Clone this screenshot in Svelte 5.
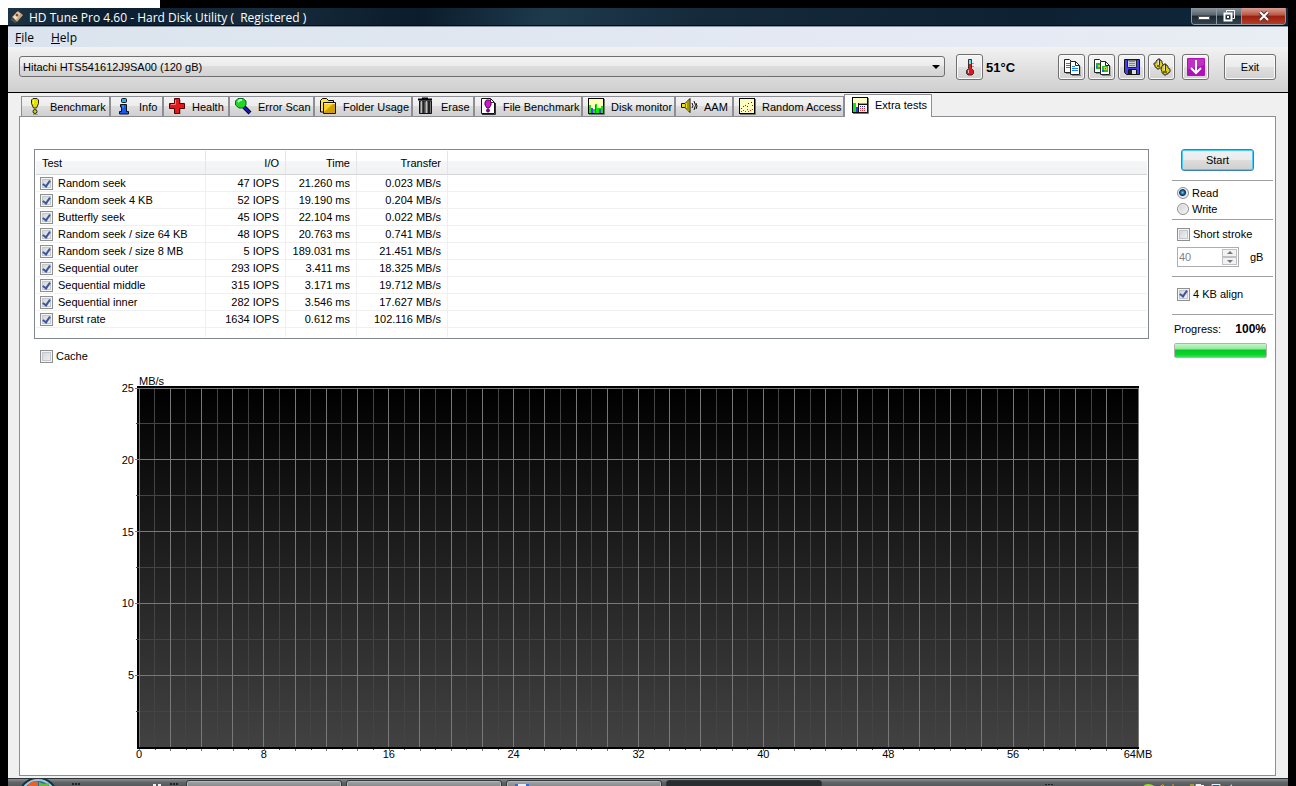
<script>
  const tabs = [
    { id: 'benchmark', label: 'Benchmark' },
    { id: 'info', label: 'Info' },
    { id: 'health', label: 'Health' },
    { id: 'scan', label: 'Error Scan' },
    { id: 'folder', label: 'Folder Usage' },
    { id: 'erase', label: 'Erase' },
    { id: 'file', label: 'File Benchmark' },
    { id: 'monitor', label: 'Disk monitor' },
    { id: 'aam', label: 'AAM' },
    { id: 'random', label: 'Random Access' },
    { id: 'extra', label: 'Extra tests' }
  ];
  let active = $state('extra');

  let tests = $state([
    { name: 'Random seek', io: '47 IOPS', time: '21.260 ms', transfer: '0.023 MB/s', on: true },
    { name: 'Random seek 4 KB', io: '52 IOPS', time: '19.190 ms', transfer: '0.204 MB/s', on: true },
    { name: 'Butterfly seek', io: '45 IOPS', time: '22.104 ms', transfer: '0.022 MB/s', on: true },
    { name: 'Random seek / size 64 KB', io: '48 IOPS', time: '20.763 ms', transfer: '0.741 MB/s', on: true },
    { name: 'Random seek / size 8 MB', io: '5 IOPS', time: '189.031 ms', transfer: '21.451 MB/s', on: true },
    { name: 'Sequential outer', io: '293 IOPS', time: '3.411 ms', transfer: '18.325 MB/s', on: true },
    { name: 'Sequential middle', io: '315 IOPS', time: '3.171 ms', transfer: '19.712 MB/s', on: true },
    { name: 'Sequential inner', io: '282 IOPS', time: '3.546 ms', transfer: '17.627 MB/s', on: true },
    { name: 'Burst rate', io: '1634 IOPS', time: '0.612 ms', transfer: '102.116 MB/s', on: true }
  ]);

  let mode = $state('read');
  let shortStroke = $state(false);
  let align = $state(true);
  let cache = $state(false);
  let size = $state(40);
  let progress = $state(100);

  const columns = Array.from({ length: 65 }, (_, i) => i);
  const rows = Array.from({ length: 11 }, (_, i) => i);
  const tools = ['copy', 'copyimage', 'save', 'options'];
</script>

{#snippet icon(name)}
  <svg class="icon" viewBox="0 0 18 18" aria-hidden="true">
    {#if name === 'benchmark'}
      <path d="M7 17h5v1H7z" fill="#999" />
      <path d="M7 1.500h4l1.500 1.500v3.500L10.500 11h-3L5.500 6.500V3z" fill="#e6e000" stroke="#222" />
      <path d="M7.500 3v4" stroke="#ffffa0" />
      <circle cx="9" cy="14.500" r="2" fill="#d8d000" stroke="#222" />
    {:else if name === 'info'}
      <rect x="6.500" y="1.500" width="5" height="4" rx="1" fill="#20b8f8" stroke="#111" />
      <path d="M5.500 7.500h6v7h2v2.500h-9v-2.500h2v-4.500h-1z" fill="#1858f0" stroke="#111" />
      <path d="M8 8v3" stroke="#50b0ff" />
    {:else if name === 'health'}
      <path d="M7 2.500h5.500v4.500H17v5h-4.500v5H7v-5H2V7h5z" fill="#777" />
      <path d="M6.500 1.500h5v5h5v5h-5v5h-5v-5h-5v-5h5z" fill="#e01820" stroke="#500" />
      <path d="M7.500 3v4.500H3" fill="none" stroke="#ff7878" />
    {:else if name === 'scan'}
      <path d="M10 10l6 6" stroke="#000" stroke-width="4" />
      <path d="M10 10l5.500 5.500" stroke="#1818d8" stroke-width="2" />
      <path d="M4 1.500h5L12 4v4l-3 3H5L1.500 8V4z" fill="#20d820" stroke="#063" />
      <path d="M4 5l2-2h2" stroke="#c0ffc0" stroke-width="2" fill="none" />
    {:else if name === 'folder'}
      <path d="M1.500 15V3.500l2-2h4l2 2h5V15z" fill="#ffe050" stroke="#000" />
      <path d="M4.500 5.500h12v11h-12z" fill="#d0a000" stroke="#111" />
      <path d="M5 6h10L5 15z" fill="#f8d030" />
      <path d="M5 6.500h11" stroke="#ffef90" />
    {:else if name === 'erase'}
      <path d="M1 2.500h14M5 1.500h6" stroke="#000" stroke-width="2" />
      <path d="M2.500 4h12v12.500h-12z" fill="#777" stroke="#111" />
      <path d="M4.500 4v12M9.500 4v12" stroke="#bbb" />
      <path d="M6.500 4v12M12 4v12" stroke="#222" stroke-width="2" />
    {:else if name === 'file'}
      <path d="M2.500 1.500h9l4 4v11h-13z" fill="#fff" stroke="#111" />
      <path d="M11.500 1.500v4h4M3 17.500h13.500V6" fill="none" stroke="#333" />
      <path d="M7.500 3h3L12 5v3l-2 3H8L6 8V5z" fill="#d018d0" stroke="#505" />
      <circle cx="9" cy="13.500" r="1.500" fill="#a0a" stroke="#505" />
    {:else if name === 'monitor'}
      <path d="M2 17.500h15.500V2" stroke="#777" fill="none" />
      <rect x="1" y="1" width="16" height="16" fill="#000" />
      <path d="M2 2h14v14H2z" fill="#ffffb8" />
      <path d="M2 8h2v3h1v1h3V7h2v4h4V9h2v7H2z" fill="#10e810" />
      <path d="M4 11h2v5H4zM8 8h1v8H8zM12 12h2v4h-2z" fill="#4048e8" />
    {:else if name === 'aam'}
      <path d="M1.500 6.500H5l5-5v14l-5-5H1.500z" fill="#f0e010" stroke="#111" />
      <path d="M5.500 7v4" stroke="#776800" />
      <path d="M8 4v10" stroke="#a89800" stroke-width="2" />
      <path d="M12 6q2 3 0 5M14 4q3 4 0 9M16 6q2 3 0 6" stroke="#111" fill="none" />
    {:else if name === 'random'}
      <path d="M2 17.500h15.500V2" stroke="#777" fill="none" />
      <rect x="1.500" y="1.500" width="15" height="15" fill="#fffcc0" stroke="#000" />
      <path d="M3 11h1v1H3zM5 9h1v1H5zM7 8h1v1H7zM9 9h1v1H9zM10 6h1v1h-1zM13 5h1v1h-1zM14 8h1v1h-1z" fill="#22f" />
      <path d="M3 14h1v1H3zM5 13h1v1H5zM7 14h1v1H7zM9 12h1v1H9zM12 13h1v1h-1zM14 12h1v1h-1zM10 14h1v1h-1z" fill="#e22" />
    {:else if name === 'extra'}
      <path d="M2 17.500h15.500V2" stroke="#777" fill="none" />
      <rect x="1.500" y="1.500" width="15" height="15" fill="#ffffc8" stroke="#000" />
      <path d="M2 7h3v9H2z" fill="#10e810" />
      <path d="M5 11h2v5H5z" fill="#33f" />
      <path d="M7 7h10v10H7z" fill="#111" />
      <path d="M8 9h8v7H8z" fill="#fff" />
      <path d="M8 7.500h8" stroke="#999" />
      <path d="M9 10.500h6" stroke="#22f" stroke-dasharray="1 1" />
      <path d="M9 12.500h6M9 14.500h6" stroke="#e22" stroke-dasharray="1 1" />
    {:else if name === 'thermo'}
      <path d="M7.500 1.500h3v9l2 2v3l-1.500 1.500h-4L5.500 15.500v-3l2-2z" fill="#e0181c" stroke="#333" />
      <path d="M8 2h2v4H8z" fill="#58e8f0" />
      <path d="M7.500 12v3" stroke="#ffb0b0" />
      <path d="M11 5.500h2M11 8.500h2" stroke="#999" />
    {:else if name === 'copy' || name === 'copyimage'}
      <path d="M3 15.500h4M9 17.500h9V8" fill="none" stroke="#888" />
      <path d="M1.500 1.500h5l3 3v10h-8z" fill="#fff" stroke="#222" />
      <path d="M7.500 3.500h5l4 4v9h-9z" fill="#fff" stroke="#222" />
      <path d="M12.500 3.500v4h4" fill="none" stroke="#222" />
      {#if name === 'copy'}
        <path d="M3 5.500h4M3 7.500h4M3 9.500h4M9 8.500h3M9 10.500h6M9 12.500h6" stroke="#1880f0" />
      {:else}
        <path d="M3 5h4v6H3z" fill="#18b830" />
        <path d="M9 8h6v6H9z" fill="#20c030" />
        <path d="M5 7h2v2H5zM11 9h3v3h-3z" fill="#e8c810" />
        <path d="M3 8h1v2H3zM9 12h2v2H9z" fill="#1868e0" />
        <path d="M12 10h1v1h-1z" fill="#e22" />
      {/if}
    {:else if name === 'save'}
      <path d="M1.500 1.500h15v15h-13l-2-2z" fill="#4040f0" stroke="#111" />
      <path d="M4.500 2h9v7.500h-9z" fill="#d0d0d0" stroke="#223" />
      <path d="M6 3.500h6M6 5.500h6M6 7.500h6" stroke="#888" />
      <path d="M5.500 11.500h8v5h-8z" fill="#ddd" stroke="#111" />
      <path d="M6 12h3v4H6z" fill="#222" />
    {:else if name === 'options'}
      <path d="M3 3l1-1h1V1h2v1l2 1v2l1 1v2L8 10H6v1H4v-1L2 9V7H1V5h2z" fill="#e0d010" stroke="#333" />
      <path d="M9 8l1-1h1V6h2v1l2 1v2l2 1v3l-2 1v1h-2v1h-2v-1l-2-1v-2l-1-1z" fill="#e0d010" stroke="#333" />
      <path d="M6.500 1v7M12.500 6v7" stroke="#333" />
      <path d="M5.500 2v5M11.500 7v5" stroke="#ddd" />
      <path d="M4 8h3M10 14h4" stroke="#776c00" stroke-width="2" />
    {:else if name === 'update'}
      <rect width="18" height="18" rx="1" fill="#b010b8" />
      <path d="M1 1h16v6L1 11z" fill="#c030c4" />
      <path d="M9 2v12M4 10l5 5 5-5" fill="none" stroke="#fff" stroke-width="2" />
    {/if}
  </svg>
{/snippet}

<div class="screen">
  <div class="window">
    <header class="titlebar">
      <svg class="app-icon" viewBox="0 0 14 14" aria-hidden="true">
        <path d="M2 7l6-6 5 4-6 7z" fill="#c9a27a" />
        <path d="M3 7l4-5 3 2-4 6z" fill="#f0dfc8" />
        <circle cx="7" cy="5" r="1.500" fill="#7a4a28" />
        <path d="M1 8l6 4-2 1-4-3z" fill="#555" />
      </svg>
      <h1>HD Tune Pro 4.60 - Hard Disk Utility (&nbsp; Registered )</h1>
      <div class="caption">
        <button aria-label="Minimize">
          <svg width="14" height="12" viewBox="0 0 14 12"><rect x="1.500" y="6.500" width="11" height="3" fill="#fff" stroke="#555" /></svg>
        </button>
        <button aria-label="Restore">
          <svg width="12" height="12" viewBox="0 0 12 12">
            <path d="M3.500 2.500v-2h8v8h-2" fill="none" stroke="#fff" />
            <path d="M1.500 3.500h7v7h-7z" fill="none" stroke="#fff" stroke-width="2" />
            <path d="M4 6h2v2H4z" fill="#fff" />
          </svg>
        </button>
        <button class="close" aria-label="Close">
          <svg width="12" height="11" viewBox="0 0 12 11">
            <path d="M2 1l8 8M10 1L2 9" stroke="#533" stroke-width="4" />
            <path d="M2 1l8 8M10 1L2 9" stroke="#fff" stroke-width="2" />
          </svg>
        </button>
      </div>
    </header>

    <nav class="menubar">
      <a href="#file"><u>F</u>ile</a>
      <a href="#help"><u>H</u>elp</a>
    </nav>

    <div class="toolbar">
      <div class="drive">
        <select aria-label="Drive">
          <option>Hitachi HTS541612J9SA00 (120 gB)</option>
        </select>
      </div>
      <div class="temperature">
        <button class="tool" aria-label="Temperature">{@render icon('thermo')}</button>
        <strong>51°C</strong>
      </div>
      <div class="tools">
        {#each tools as tool}
          <button class="tool" aria-label={tool}>{@render icon(tool)}</button>
        {/each}
      </div>
      <button class="tool update" aria-label="Minimize to tray">{@render icon('update')}</button>
      <button class="exit">Exit</button>
    </div>

    <main>
      <div class="tabs" role="tablist">
        {#each tabs as tab}
          <button role="tab" class="tab" class:active={active === tab.id} aria-selected={active === tab.id} onclick={() => (active = tab.id)}>
            {@render icon(tab.id)}
            <span>{tab.label}</span>
          </button>
        {/each}
      </div>

      <div class="panel">
        <section class="results">
          <div class="list">
            <table>
              <colgroup>
                <col class="c-test" /><col class="c-io" /><col class="c-time" /><col class="c-transfer" /><col />
              </colgroup>
              <thead>
                <tr><th>Test</th><th>I/O</th><th>Time</th><th>Transfer</th><th></th></tr>
              </thead>
              <tbody>
                {#each tests as test}
                  <tr>
                    <td><label class="check"><input type="checkbox" bind:checked={test.on} />{test.name}</label></td>
                    <td>{test.io}</td>
                    <td>{test.time}</td>
                    <td>{test.transfer}</td>
                    <td></td>
                  </tr>
                {/each}
                <tr class="filler"><td></td><td></td><td></td><td></td><td></td></tr>
              </tbody>
            </table>
          </div>

          <label class="check cache"><input type="checkbox" bind:checked={cache} />Cache</label>

          <div class="chart">
            <svg class="plot" role="img" aria-label="Transfer rate in MB/s">
              <defs>
                <linearGradient id="shade" x1="0" y1="0" x2="0" y2="1">
                  <stop offset="0" stop-color="#000" />
                  <stop offset="1" stop-color="#424242" />
                </linearGradient>
              </defs>
              <rect width="100%" height="100%" fill="url(#shade)" />
              <!-- minor lines first so the major ones stay on top -->
              {#each columns.filter((c) => c % 2) as c}
                <line class="minor" x1="{c / 0.64}%" x2="{c / 0.64}%" y1="0" y2="100%" />
              {/each}
              {#each rows.filter((r) => r % 2) as r}
                <line class="minor" x1="-3" x2="100%" y1="{r * 10}%" y2="{r * 10}%" />
              {/each}
              {#each columns.filter((c) => c % 2 === 0) as c}
                <line class="major" x1="{c / 0.64}%" x2="{c / 0.64}%" y1="0" y2="100%" />
              {/each}
              {#each rows.filter((r) => r % 2 === 0 && r < 10) as r}
                <line class="major" x1="-4" x2="100%" y1="{r * 10}%" y2="{r * 10}%" />
                <text x="-5" y="{r * 10}%" dy="4" text-anchor="end">{25 - r * 2.5}</text>
              {/each}
              <text x="0" y="-3">MB/s</text>
              {#each columns.filter((c) => c % 8 === 0) as c}
                <text x="{c / 0.64}%" y="100%" dy="11" text-anchor="middle">{c}{c === 64 ? 'MB' : ''}</text>
              {/each}
            </svg>
            <div class="ticks">
              {#each columns as c}<i class:long={c % 2 === 0}></i>{/each}
            </div>
          </div>
        </section>

        <aside>
          <button class="start">Start</button>
          <div class="group">
            <label class="option"><input type="radio" value="read" bind:group={mode} />Read</label>
            <label class="option"><input type="radio" value="write" bind:group={mode} />Write</label>
          </div>
          <div class="group stroke">
            <label class="check"><input type="checkbox" bind:checked={shortStroke} />Short stroke</label>
            <div class="size">
              <div class="spin" class:off={!shortStroke}>
                <input id="size" type="number" bind:value={size} disabled={!shortStroke} />
                <div class="arrows">
                  <button aria-label="Increase" disabled={!shortStroke} onclick={() => size++}></button>
                  <button class="down" aria-label="Decrease" disabled={!shortStroke} onclick={() => size--}></button>
                </div>
              </div>
              <label for="size">gB</label>
            </div>
          </div>
          <div class="group align">
            <label class="check"><input type="checkbox" bind:checked={align} />4 KB align</label>
          </div>
          <div class="group">
            <div class="progress-text"><span>Progress:</span><strong>{progress}%</strong></div>
            <div class="bar"><div class="fill" style="width: {progress}%"></div></div>
          </div>
        </aside>
      </div>
    </main>
  </div>

  <footer class="taskbar">
    <svg class="orb" viewBox="0 0 40 40" aria-hidden="true">
      <circle cx="20" cy="20" r="19" fill="#2a6a94" stroke="#12303f" stroke-width="2" />
      <circle cx="20" cy="20" r="17" fill="none" stroke="#9cc8dc" stroke-width="2" />
      <path d="M10 8q5-6 10-3v6H9z" fill="#e8602c" />
      <path d="M21 5q5 3 10 1l-1 6h-9z" fill="#6cb43c" />
    </svg>
    <span class="grip"></span>
    <svg class="launch" viewBox="0 0 10 4" aria-hidden="true">
      <path d="M1 2h3v2H1zM6 2h3v2H6z" fill="#eee" />
    </svg>
    <span class="grip"></span>
    <div class="tasks">
      <span class="task"></span>
      <span class="task"></span>
      <span class="task">
        <svg width="14" height="4" viewBox="0 0 14 4"><path d="M0 4V1h14v3z" fill="#3a68c8" /><path d="M3 1h8v3H3z" fill="#e8ecf4" /></svg>
      </span>
      <span class="task current"></span>
    </div>
    <svg class="tray" viewBox="0 0 192 8" aria-hidden="true">
      <path d="M1 5.500h8" stroke="#222" stroke-dasharray="2 1" />
      <path d="M44 7.500h10" stroke="#999" stroke-dasharray="3 2" />
      <path d="M99 8q1-3 5-3 4 0 8 3z" fill="#a0dc30" />
      <path d="M116 7.500l3-2 1 2M129 5v3" stroke="#e0a020" fill="none" />
      <path d="M122 8V6l5 1v1z" fill="#2a7a88" />
      <path d="M147 5v3M149 5v3" stroke="#e8d020" />
      <path d="M152 5h5v1h3v2h-9z" fill="#eee" />
      <path d="M168 8V5.500h8V8" fill="#268" stroke="#eee" />
      <path d="M185 8l3-3v3" fill="#ccc" />
    </svg>
  </footer>
</div>

<style>
  :global(body) {
    margin: 0;
    background:
      linear-gradient(#fff, #fff) 0 0 / 160px 8px no-repeat,
      linear-gradient(#fff, #fff) 0 0 / 8px 25px no-repeat,
      #000;
    font-family: 'Liberation Sans', Arial, sans-serif;
    font-size: 11px;
    color: #000;
  }

  .screen {
    display: flex;
    flex-direction: column;
    box-sizing: border-box;
    height: 100vh;
    padding: 8px 8px 0;
    overflow: hidden;
  }

  button,
  input,
  select {
    box-sizing: border-box;
    margin: 0;
    padding: 0;
    font: inherit;
    color: inherit;
  }

  .window {
    flex: 1;
    display: flex;
    flex-direction: column;
    min-height: 0;
    background: #f0f0f0;
  }

  .titlebar {
    display: flex;
    align-items: flex-start;
    height: 18px;
    padding: 0 2px;
    border-bottom: 1px solid #89969f;
    background: linear-gradient(100deg, #1c3444 0%, #0b1d2e 8%, #172c3d 20%, #0b1c2c 32%, #1d3a4c 42%, #14293a 55%, #0d2133 80%, #10283a 100%);
    box-shadow: inset 0 -1px #050d14;
  }

  .app-icon {
    width: 14px;
    height: 14px;
    margin-top: 2px;
  }

  h1 {
    flex: 1;
    margin: 0 0 0 5px;
    font: 12px/19px 'Open Sans', 'Noto Sans', sans-serif;
    color: #fff;
    white-space: nowrap;
  }

  .caption {
    display: flex;
    height: 16px;
    border: 1px solid #8d9aa3;
    border-top: 0;
    border-radius: 0 0 4px 4px;
    overflow: hidden;
  }

  .caption button {
    display: flex;
    align-items: center;
    justify-content: center;
    width: 25px;
    border: 0;
    border-right: 1px solid #8d9aa3;
    background: linear-gradient(#8c969e, #56626c 45%, #1a2732 50%, #33424e);
  }

  .caption .close {
    width: 43px;
    border-right: 0;
    background: linear-gradient(#d8a094, #bb5544 45%, #982010 50%, #b83c20);
  }

  .menubar {
    display: flex;
    gap: 17px;
    height: 20px;
    padding: 0 7px;
    background: linear-gradient(90deg, #dbe4ee, #e6eaf4 80%, #e8eef2);
    font: 12px/22px 'Open Sans', 'Noto Sans', sans-serif;
  }

  .menubar a {
    color: #000;
    text-decoration: none;
  }

  .toolbar {
    display: flex;
    align-items: flex-start;
    height: 38px;
    padding: 7px 12px 0 11px;
    border-bottom: 1px solid #000;
    background: linear-gradient(#f2f2f2, #cfcfcf);
  }

  .drive {
    position: relative;
    flex: 1;
    margin: 2px 11px 0 0;
  }

  .drive::after {
    content: '';
    position: absolute;
    top: 9px;
    right: 5px;
    border: 4px solid transparent;
    border-top-color: #000;
    border-bottom: 0;
  }

  select {
    appearance: none;
    display: block;
    width: 100%;
    height: 21px;
    padding: 0 3px;
    border: 1px solid #707070;
    border-radius: 3px;
    background: linear-gradient(#f2f2f2, #ebebeb 48%, #dddddd 50%, #d2d2d2);
  }

  .temperature {
    display: flex;
    align-items: center;
    gap: 3px;
    width: 102px;
  }

  .temperature strong {
    font-size: 13px;
  }

  .tools {
    display: flex;
    gap: 3px;
  }

  .tool,
  .exit {
    display: flex;
    align-items: center;
    justify-content: center;
    width: 27px;
    height: 26px;
    border: 1px solid #707070;
    border-radius: 3px;
    background: linear-gradient(#f4f4f4, #ececec 48%, #dfdfdf 50%, #d2d2d2);
    box-shadow: inset 0 0 0 1px #fafafa;
  }

  .update {
    margin: 0 15px 0 7px;
  }

  .exit {
    width: 52px;
  }

  .icon {
    flex: none;
    width: 18px;
    height: 18px;
  }

  main {
    flex: 1;
    display: flex;
    flex-direction: column;
    min-height: 0;
    padding: 1px 12px 2px 11px;
  }

  .tabs {
    display: grid;
    grid-template-columns: 89px 53px 66px 85px 98px 62px 108px 93px 58px 111px 88px;
    align-items: end;
    height: 22px;
    padding-left: 2px;
  }

  .tab {
    display: flex;
    align-items: center;
    gap: 6px;
    height: 20px;
    padding: 0 0 1px 4px;
    border: 1px solid #8c8e94;
    border-bottom: 0;
    background: linear-gradient(#f3f3f3, #ececec 48%, #dddddd 50%, #cfcfcf);
    white-space: nowrap;
  }

  .tab span {
    padding-top: 1px;
  }

  .tab.active {
    z-index: 1;
    height: 23px;
    margin-bottom: -1px;
    padding: 0 0 3px 6px;
    background: #fff;
  }

  .panel {
    flex: 1;
    display: grid;
    grid-template-columns: 1fr 101px;
    column-gap: 23px;
    min-height: 0;
    padding: 32px 2px 0 14px;
    border: 1px solid #8c8e94;
    background: #fff;
  }

  .results {
    display: flex;
    flex-direction: column;
    min-width: 0;
  }

  .list {
    padding: 1px;
    border: 1px solid #828790;
  }

  table {
    width: 100%;
    table-layout: fixed;
    border-collapse: separate;
    border-spacing: 0;
  }

  .c-test {
    width: 170px;
  }

  .c-io {
    width: 80px;
  }

  .c-time {
    width: 71px;
  }

  .c-transfer {
    width: 91px;
  }

  th {
    box-sizing: border-box;
    height: 24px;
    padding: 0 6px;
    border-right: 1px solid #e3e5e8;
    border-bottom: 1px solid #d5d5d5;
    background: linear-gradient(#fff 42%, #f5f6f8 43%, #f1f2f4);
    font-weight: normal;
    text-align: right;
  }

  td {
    box-sizing: border-box;
    height: 17px;
    padding: 1px 6px 0;
    border-right: 1px solid #f0f0f0;
    border-bottom: 1px solid #f0f0f0;
    line-height: 15px;
    text-align: right;
    white-space: nowrap;
  }

  th:first-child {
    text-align: left;
  }

  td:first-child {
    padding: 1px 4px 0;
    text-align: left;
  }

  th:last-child,
  td:last-child {
    border-right: 0;
  }

  .filler td {
    height: 9px;
    padding: 0;
    border-bottom: 0;
    line-height: 8px;
  }

  .check,
  .option {
    display: flex;
    align-items: center;
    gap: 3px;
    height: 16px;
    white-space: nowrap;
  }

  td .check {
    gap: 5px;
    height: 15px;
  }

  .cache {
    margin: 9px 0 0 6px;
  }

  input[type='checkbox'] {
    appearance: none;
    display: flex;
    align-items: center;
    justify-content: center;
    width: 13px;
    height: 13px;
    border: 1px solid #8e8f8f;
    background: linear-gradient(135deg, #cdd0d5, #f6f6f6);
    box-shadow: inset 0 0 0 1px #f4f4f4, inset 0 0 0 2px #c4c8ce;
  }

  input[type='checkbox']:checked::after {
    content: '';
    width: 3px;
    height: 6px;
    margin-bottom: 2px;
    border: solid #3d569c;
    border-width: 0 2px 2px 0;
    transform: rotate(35deg);
  }

  input[type='radio'] {
    appearance: none;
    width: 12px;
    height: 12px;
    border: 1px solid #8e8f8f;
    border-radius: 50%;
    background: linear-gradient(135deg, #cdd0d5, #f6f6f6);
    box-shadow: inset 0 0 0 1px #f4f4f4;
  }

  input[type='radio']:checked {
    background: radial-gradient(circle at 45% 45%, #7fd0f0 0, #1a5f92 2px, #0c2f50 3px, #dde 4px);
  }

  .chart {
    flex: 1;
    display: flex;
    flex-direction: column;
    min-height: 0;
    margin: 22px 10px 26px 103px;
  }

  .plot {
    flex: 1;
    box-sizing: border-box;
    width: 100%;
    min-height: 0;
    border: solid #000;
    border-width: 2px 1px 2px 2px;
    overflow: visible;
    shape-rendering: crispEdges;
  }

  .plot text {
    fill: #000;
  }

  .major {
    stroke: #787878;
  }

  .minor {
    stroke: #444;
  }

  .ticks {
    display: flex;
    justify-content: space-between;
    height: 0;
    padding: 0 1px 0 2px;
  }

  .ticks i {
    width: 1px;
    height: 1px;
    background: #444;
  }

  .ticks .long {
    height: 2px;
    background: #787878;
  }

  aside {
    display: flex;
    flex-direction: column;
  }

  .start {
    width: 73px;
    height: 22px;
    margin: 0 0 9px 9px;
    border: 1px solid #3c7fb1;
    border-radius: 3px;
    background: linear-gradient(#f2f2f2, #ebebeb 48%, #dddddd 50%, #cfcfcf);
    box-shadow: inset 0 0 0 1px #48d0f8;
  }

  .group {
    padding: 4px 0 2px 5px;
    border-top: 1px solid #a0a0a0;
  }

  .stroke {
    padding: 6px 0 9px 5px;
  }

  .align {
    padding: 9px 0 12px 5px;
  }

  .size {
    display: flex;
    align-items: center;
    gap: 11px;
    margin-top: 5px;
  }

  .spin {
    display: flex;
    box-sizing: border-box;
    width: 62px;
    height: 20px;
    padding: 0 1px;
    border: 1px solid #abadb3;
  }

  .spin input {
    appearance: textfield;
    flex: 1;
    min-width: 0;
    border: 0;
    background: none;
  }

  .spin input::-webkit-inner-spin-button {
    display: none;
  }

  .off input {
    color: #838383;
  }

  .arrows {
    display: flex;
    flex-direction: column;
    justify-content: space-evenly;
  }

  .arrows button {
    display: flex;
    align-items: center;
    justify-content: center;
    width: 15px;
    height: 8px;
    border: 1px solid #c0c0c0;
    background: #f2f2f2;
  }

  .arrows button::after {
    content: '';
    border: 3px solid transparent;
    border-top: 0;
    border-bottom-color: #777;
  }

  .arrows .down::after {
    border: 3px solid transparent;
    border-bottom: 0;
    border-top-color: #777;
  }

  .progress-text {
    display: flex;
    justify-content: space-between;
    height: 20px;
    margin: 0 7px 4px -3px;
    line-height: 20px;
  }

  .progress-text strong {
    font-size: 12px;
  }

  .bar {
    box-sizing: border-box;
    height: 15px;
    margin: 0 6px 0 -3px;
    border: 1px solid #b2b2b2;
    border-radius: 2px;
    background: #e6e6e6;
  }

  .fill {
    height: 100%;
    background: linear-gradient(#c8f4cc, #90e89a 40%, #06c828 45%, #0ad42c 80%, #3ce058);
  }

  .taskbar {
    display: flex;
    flex: none;
    height: 8px;
    box-sizing: border-box;
    border-top: 1px solid #2e3436;
    background: linear-gradient(#8a8e90, #606466 50%, #55595b);
    overflow: hidden;
  }

  .orb {
    flex: none;
    width: 40px;
    height: 40px;
    margin: -2px 14px 0 10px;
  }

  .grip {
    flex: none;
    width: 8px;
    height: 2px;
    margin-top: 4px;
    background: repeating-linear-gradient(90deg, #222 0 2px, transparent 2px 3px);
  }

  .launch {
    flex: none;
    width: 10px;
    height: 4px;
    margin: 3px 8px 0 72px;
  }

  .tasks {
    display: flex;
    flex: 1;
    gap: 4px;
    padding: 1px 0 0 8px;
  }

  .task {
    box-sizing: border-box;
    width: 156px;
    height: 30px;
    padding: 2px 0 0 8px;
    border: 1px solid #34393b;
    border-radius: 3px;
    background: linear-gradient(#a4a6a7, #6c6f70 10px);
    box-shadow: inset 0 0 0 1px #b4b7b8;
  }

  .task svg {
    display: block;
  }

  .current {
    background: #2a2d2f;
    box-shadow: none;
  }

  .tray {
    flex: none;
    width: 192px;
    height: 8px;
    margin-right: 52px;
  }
</style>
